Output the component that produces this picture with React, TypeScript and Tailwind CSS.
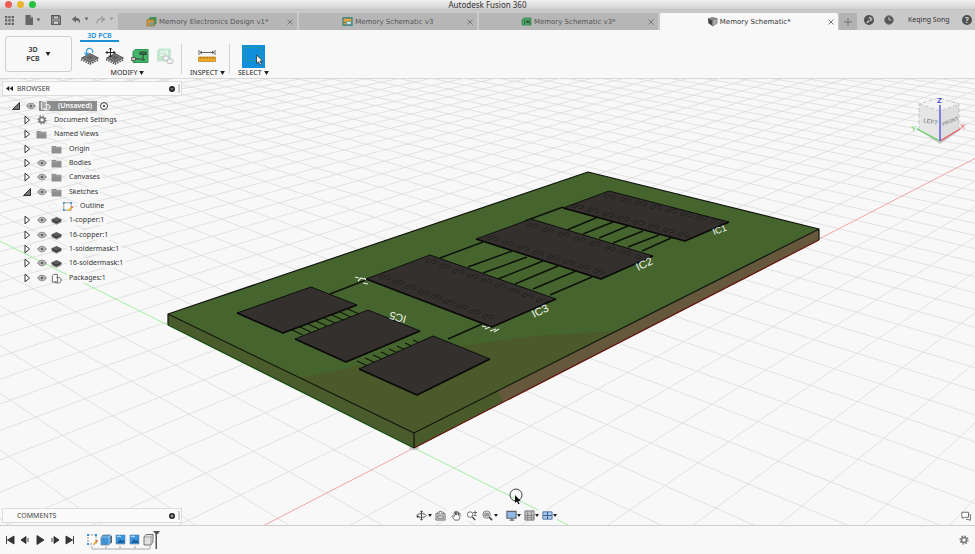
import { useState, type ReactNode } from 'react';

type Kind = 'folder' | 'gear' | 'sketch' | 'body' | 'package';

interface TreeRow {
  label: string;
  kind: Kind;
  level: 1 | 2;
  eye?: 'on' | 'off';
  open?: boolean;
}

const rows: TreeRow[] = [
  { label: 'Document Settings', kind: 'gear', level: 1 },
  { label: 'Named Views', kind: 'folder', level: 1 },
  { label: 'Origin', kind: 'folder', level: 1, eye: 'off' },
  { label: 'Bodies', kind: 'folder', level: 1, eye: 'on' },
  { label: 'Canvases', kind: 'folder', level: 1, eye: 'on' },
  { label: 'Sketches', kind: 'folder', level: 1, eye: 'on', open: true },
  { label: 'Outline', kind: 'sketch', level: 2, eye: 'off' },
  { label: '1-copper:1', kind: 'body', level: 1, eye: 'on' },
  { label: '16-copper:1', kind: 'body', level: 1, eye: 'on' },
  { label: '1-soldermask:1', kind: 'body', level: 1, eye: 'on' },
  { label: '16-soldermask:1', kind: 'body', level: 1, eye: 'on' },
  { label: 'Packages:1', kind: 'package', level: 1, eye: 'on' },
];

const tabs = [
  { label: 'Memory Electronics Design v1*', icon: 'design' },
  { label: 'Memory Schematic v3', icon: 'schematic' },
  { label: 'Memory Schematic v3*', icon: 'board' },
  { label: 'Memory Schematic*', icon: 'cube' },
];

/* ---------- small icons ---------- */

function Eye({ off }: { off?: boolean }) {
  return (
    <svg viewBox="0 0 10 8" className={`h-2 w-2.5 ${off ? 'opacity-25' : ''}`}>
      <path d="M.5 4Q5-1.8 9.5 4 5 9.8.5 4z" fill={off ? 'none' : '#a3a3a3'} stroke="#777" strokeWidth=".8" strokeDasharray={off ? '1.5 1' : undefined} />
      {!off && <circle cx="5" cy="4" r="2" fill="#666" stroke="#eee" strokeWidth=".7" />}
    </svg>
  );
}

function Arrow({ open }: { open?: boolean }) {
  return (
    <svg viewBox="0 0 8 10" className="h-2.5 w-2">
      {open ? (
        <path d="M7.5 1.5v7H.5z" fill="#777" stroke="#222" strokeWidth=".9" />
      ) : (
        <path d="M2 1.2L6.6 5 2 8.8z" fill="#fff" stroke="#333" strokeWidth="1" />
      )}
    </svg>
  );
}

function Gear({ className }: { className: string }) {
  return (
    <svg viewBox="0 0 12 12" className={className}>
      <circle cx="6" cy="6" r="4.7" fill="none" stroke="#777" strokeWidth="1.6" strokeDasharray="1.8 1.89" />
      <circle cx="6" cy="6" r="3" fill="none" stroke="#777" strokeWidth="1.8" />
    </svg>
  );
}

function PackageIcon({ light }: { light?: boolean }) {
  return (
    <svg viewBox="0 0 12 12" className="size-[11px] shrink-0">
      <path d="M1.500 10V3L3 1.500h4V10zM6 5h3.500L11 6.500V9l-1.800 1.800H5V9" fill={light ? '#aaa' : '#fafafa'} stroke={light ? '#fff' : '#555'} strokeWidth=".9" strokeLinejoin="round" />
    </svg>
  );
}

function SketchIcon() {
  return (
    <svg viewBox="0 0 12 12" className="size-[11px]">
      <path d="M2 2h8v8H2z" fill="#fff" stroke="#777" strokeWidth=".8" />
      <path d="M1 1h2v2H1zM9 1h2v2H9zM1 9h2v2H1z" fill="#3b95d9" />
      <path d="M6 11l1-2 3.500-3 1.200 1.200L8.500 10.500z" fill="#f0b73b" />
      <path d="M10 6.500l1-1 1 1.200-1 1z" fill="#d6403a" />
    </svg>
  );
}

function KindIcon({ kind }: { kind: Kind }) {
  switch (kind) {
    case 'gear':
      return <Gear className="size-2.5" />;
    case 'sketch':
      return <SketchIcon />;
    case 'package':
      return <PackageIcon />;
    case 'body':
      return (
        <svg viewBox="0 0 12 10" className="h-[9px] w-[11px]">
          <path d="M.5 5.500L6 8.500l5.500-3v1.500L6 9.800.500 7z" fill="#8a8a8a" />
          <path d="M.5 3.500v2L6 8.500l5.500-3v-2z" fill="#3d3d3d" />
          <path d="M6 1l5.500 2.500L6 6 .500 3.500z" fill="#5e5e5e" />
        </svg>
      );
    default:
      return (
        <svg viewBox="0 0 12 10" className="h-[9px] w-[11px]">
          <path d="M.5 1h4.500l1 1h5.500v7.500H.5z" fill="#8e8e8e" />
          <path d="M.5 3.200h11" stroke="#b9b9b9" strokeWidth=".6" />
        </svg>
      );
  }
}

function TabIcon({ name }: { name: string }) {
  switch (name) {
    case 'design':
      return (
        <svg viewBox="0 0 12 12" className="size-[11px]">
          <path d="M4 1h7.500v7L9 10.500H3V3z" fill="#3f9358" />
          <path d="M1 4h8v7H1z" fill="#d69337" stroke="#7d6a45" strokeWidth=".6" />
          <path d="M4 7h4v3H4z" fill="#5aa0a8" />
        </svg>
      );
    case 'schematic':
      return (
        <svg viewBox="0 0 12 10" className="h-[9px] w-[11px]">
          <path d="M1 1h10v8H1z" fill="#eba137" stroke="#1e7e88" strokeWidth="1.200" />
          <path d="M5 5h5v3H5z" fill="#e6f2f2" stroke="#2b8e99" strokeWidth=".7" />
          <path d="M2 6h2" stroke="#1e7e88" />
        </svg>
      );
    case 'board':
      return (
        <svg viewBox="0 0 12 10" className="h-[9px] w-[11px]">
          <path d="M3 1h8v8H1V3z" fill="#4fa56b" stroke="#358450" strokeWidth=".8" />
          <path d="M4 3v5M9.500 3v5" stroke="#256b3c" />
          <path d="M6 4h2.500v2.500H6z" fill="#26442f" />
        </svg>
      );
    default:
      return (
        <svg viewBox="0 0 12 12" className="size-[11px]">
          <path d="M1 2.500L6 1l5 1.500-5 2z" fill="#888" />
          <path d="M1 2.500l5 2V11L1.500 8z" fill="#444" />
          <path d="M6 4.500l5-2V8l-5 3z" fill="#aaa" stroke="#555" strokeWidth=".6" />
        </svg>
      );
  }
}

function Chip3D({ children }: { children: ReactNode }) {
  return (
    <svg viewBox="0 0 20 18" className="h-[18px] w-5">
      <path d="M1 12.500l9 4.500 9-4.500" fill="none" stroke="#555" strokeWidth="1.600" strokeDasharray="1.500 1" />
      <path d="M1.500 11L10 6.500l8.500 4.500-8.500 4.500z" fill="#7a7a7a" stroke="#444" strokeWidth=".8" />
      <path d="M6 10.500l4-2 4 2-4 2z" fill="#606060" />
      {children}
    </svg>
  );
}

/* ---------- application bar ---------- */

function TitleBar() {
  return (
    <header className="relative flex h-2.5 items-center justify-center overflow-hidden border-b border-[#c4c4c4] bg-gradient-to-b from-[#f0f0f0] to-[#d2d2d2]">
      <div className="absolute left-[5px] flex gap-[5px]">
        <button aria-label="Close" className="size-[7px] rounded-full bg-[#ee5c54]" />
        <button aria-label="Minimise" className="size-[7px] rounded-full bg-[#e9b52f]" />
        <button aria-label="Zoom" className="size-[7px] rounded-full bg-[#27c13f]" />
      </div>
      <h1 className="text-[8px] leading-[10px] text-[#333]">Autodesk Fusion 360</h1>
    </header>
  );
}

function TabBar({ active, onSelect }: { active: number; onSelect: (i: number) => void }) {
  return (
    <div className="flex h-5 items-end bg-[#c9c9c9]">
      <div className="flex h-full w-[118px] shrink-0 items-center pl-[5px]">
        <button aria-label="Data panel">
          <svg viewBox="0 0 10 10" className="size-[9px]">
            <path d="M0 0h2.500v2.500H0zM3.700 0h2.500v2.500H3.700zM7.400 0H10v2.500H7.400zM0 3.700h2.500v2.500H0zM3.700 3.700h2.500v2.500H3.700zM7.400 3.700H10v2.500H7.400zM0 7.400h2.500V10H0zM3.700 7.400h2.500V10H3.700zM7.400 7.400H10V10H7.400z" fill="#666" />
          </svg>
        </button>
        <button aria-label="File" className="ml-[10px]">
          <svg viewBox="0 0 18 10" className="h-2.5 w-[18px]">
            <path d="M1.500 0h5L9 2.500V10H1.500z" fill="#666" />
            <path d="M6.500 0v2.500H9" fill="#bbb" />
            <path d="M12.500 3.500h4l-2 3z" fill="#666" />
          </svg>
        </button>
        <button aria-label="Save" className="ml-[9px]">
          <svg viewBox="0 0 10 10" className="size-[10px]">
            <path d="M.7.700h7.600l1 1v7.600H.700z" fill="#aaa" stroke="#555" strokeWidth="1.200" />
            <path d="M2.500 1h5v3h-5zM2.500 6h5v3.500h-5z" fill="#ccc" stroke="#555" strokeWidth=".8" />
          </svg>
        </button>
        <button aria-label="Undo" className="ml-[10px]">
          <svg viewBox="0 0 18 10" className="h-2.5 w-[18px]">
            <path d="M5 1v2h1.500Q9.500 3.500 9 9 8.500 5.500 5 5.500V7.500L.800 4.200z" fill="#666" />
            <path d="M13.500 2.500h4l-2 3z" fill="#666" />
          </svg>
        </button>
        <button aria-label="Redo" className="ml-[7px]">
          <svg viewBox="0 0 18 10" className="h-2.5 w-[18px]">
            <path d="M5 1.500L8.500 4.200 5 7M8.500 4.200H4Q1 4.200 1 8.500" fill="none" stroke="#9b9b9b" strokeWidth="1.200" />
            <path d="M13.500 2.500h4l-2 3z" fill="#9b9b9b" />
          </svg>
        </button>
      </div>
      <nav className="flex h-[17px] min-w-0 flex-1 gap-[2px] font-['DejaVu_Sans','Noto_Sans',sans-serif]">
        {tabs.map((tab, i) => (
          <div
            key={tab.label}
            className={`relative flex min-w-0 flex-1 items-center justify-center rounded-t-[2px] ${
              i === active ? 'bg-[#f8f8f8] text-[#333]' : 'bg-[#b6b6b6] text-[#555]'
            }`}
          >
            <button onClick={() => onSelect(i)} className="flex items-center gap-[2px] text-[7px] leading-[10px] whitespace-nowrap">
              <TabIcon name={tab.icon} />
              {tab.label}
            </button>
            <button aria-label={`Close ${tab.label}`} className="absolute right-1">
              <svg viewBox="0 0 6 6" className="size-[6px]">
                <path d="M.5.500l5 5M5.500.500l-5 5" stroke="#777" strokeWidth="1" />
              </svg>
            </button>
          </div>
        ))}
      </nav>
      <button aria-label="New tab" className="ml-px flex h-[17px] w-[18px] shrink-0 items-center justify-center bg-[#b3b3b3]">
        <svg viewBox="0 0 8 8" className="size-2">
          <path d="M4 0v8M0 4h8" stroke="#858585" strokeWidth="1.400" />
        </svg>
      </button>
      <div className="flex h-full w-[118px] shrink-0 items-center pl-[7px] text-[7px] leading-[10px] text-[#333]">
        <button aria-label="Extensions">
          <svg viewBox="0 0 10 10" className="size-2.5">
            <circle cx="5" cy="5" r="5" fill="#505050" />
            <path d="M2.500 7.500l2.200-2.200M4.500 3.500q1-2 2.500-1L5.800 4l1 .7L8 3.500Q8 6 5.500 6L3 8" fill="none" stroke="#ccc" strokeWidth="1" />
          </svg>
        </button>
        <button aria-label="Job status" className="ml-[10px]">
          <svg viewBox="0 0 10 10" className="size-2.5">
            <circle cx="5" cy="5" r="4.300" fill="#555" stroke="#777" />
            <path d="M5 2.200V5h2.300" fill="none" stroke="#ccc" strokeWidth="1" />
          </svg>
        </button>
        <button className="ml-[14px] whitespace-nowrap">Keqing Song</button>
        <button aria-label="Help" className="mr-[3px] ml-auto flex size-2.5 items-center justify-center rounded-full bg-[#505050] text-[8px] font-bold text-[#ddd]">
          ?
        </button>
      </div>
    </div>
  );
}

function ToolGroup({ label, children }: { label: string; children: ReactNode }) {
  return (
    <div className="flex flex-col items-center">
      <div className="flex h-6 items-center gap-[5px]">{children}</div>
      <button className="flex items-center gap-[2px] text-[7px] leading-[10px] text-[#222]">
        {label}
        <svg viewBox="0 0 6 5" className="h-1 w-[5px]">
          <path d="M0 0h6L3 5z" fill="#222" />
        </svg>
      </button>
    </div>
  );
}

function Toolbar() {
  return (
    <div className="flex h-[49px] items-start border-b border-[#d9d9d9] bg-[#f8f8f8] pl-[5px]">
      <button className="mt-[6px] flex h-9 w-[67px] shrink-0 items-center justify-center gap-[5px] rounded-[3px] border border-[#cfcfcf] text-[7px] leading-[9px] font-semibold text-[#333]">
        <span>
          3D
          <br />
          PCB
        </span>
        <svg viewBox="0 0 6 5" className="h-1 w-[6px]">
          <path d="M0 0h6L3 5z" fill="#222" />
        </svg>
      </button>
      <div className="ml-[8px]">
        <button className="mt-[2px] block h-[10px] w-[39px] border-b-2 border-[#1b8fd6] text-[7px] leading-[8px] font-semibold text-[#1b8fd6]">
          3D PCB
        </button>
        <div className="mt-[2px] flex">
          <ToolGroup label="MODIFY">
            <button aria-label="Rotate component">
              <Chip3D>
                <path d="M6.500 5.500a3.200 3.200 0 116 .5M6.500 9.500V5.500M4.500 5.500l2 2.500 2-2.500" fill="none" stroke="#2d9bd8" strokeWidth="1.200" />
              </Chip3D>
            </button>
            <button aria-label="Move component">
              <Chip3D>
                <path d="M5.500 1v9M1 5.500h9M4 2.500L5.500 1 7 2.500M4 8.500L5.500 10 7 8.500M2.500 4L1 5.500 2.500 7M8.500 4L10 5.500 8.500 7" fill="none" stroke="#222" strokeWidth="1" />
              </Chip3D>
            </button>
            <button aria-label="Push to 2D board">
              <svg viewBox="0 0 20 18" className="h-[18px] w-5">
                <path d="M5 2.500H18v13H3V4.500z" fill="#45b56b" stroke="#2f9450" />
                <path d="M10 5h6v2.500h-6zM13 7.500V13M11 13h4" fill="#3c6d4b" stroke="#2c4c36" strokeWidth="1.200" />
                <path d="M1.500 10.500h4v3h-4z" fill="#ccc" stroke="#555" strokeWidth=".9" />
                <path d="M5.500 12H11" stroke="#444" strokeWidth="1.200" />
              </svg>
            </button>
            <button aria-label="Link to 2D board" disabled>
              <svg viewBox="0 0 20 18" className="h-[18px] w-5 opacity-45">
                <path d="M4 1.500h12v13H2V4z" fill="#86d69c" />
                <path d="M5 5h7M5 8h4M12 3v6" stroke="#dff2e4" strokeWidth="1.500" />
                <rect x="8" y="9" width="6" height="4.500" rx="2" fill="#eee" stroke="#777" />
                <rect x="12" y="12" width="6" height="4.500" rx="2" fill="#eee" stroke="#777" />
              </svg>
            </button>
          </ToolGroup>
          <div className="mr-[8px] ml-[6px] h-[30px] w-px bg-[#d2d2d2]" />
          <ToolGroup label="INSPECT">
            <button aria-label="Measure">
              <svg viewBox="0 0 18 12" className="h-3 w-[18px]">
                <path d="M1 0v5M17 0v5M2 2.500h14M4 1L2 2.500 4 4M14 1l2 1.500L14 4" fill="none" stroke="#555" strokeWidth=".9" />
                <path d="M.5 7h17v4.500H.5z" fill="#efac27" stroke="#b57a18" strokeWidth=".7" />
                <path d="M3 7v2M6 7v2M9 7v2M12 7v2M15 7v2" stroke="#8a5a0e" strokeWidth=".7" />
              </svg>
            </button>
          </ToolGroup>
          <div className="mr-[8px] ml-[4px] h-[30px] w-px bg-[#d2d2d2]" />
          <ToolGroup label="SELECT">
            <button aria-label="Select" className="bg-[#0f8edb]">
              <svg viewBox="0 0 23 23" className="size-[23px]">
                <path d="M2 2.500h17v13H2z" fill="none" stroke="#2ca17c" strokeWidth="1" strokeDasharray="2.500 1.500" />
                <path d="M14.500 10v8.500l2-1.800 1.500 3.300 1.500-.7-1.500-3.200h2.700z" fill="#fff" stroke="#333" strokeWidth=".8" />
              </svg>
            </button>
          </ToolGroup>
        </div>
      </div>
    </div>
  );
}

/* ---------- 3D scene ---------- */

// ground plane to screen: origin is the near corner of the board
const A = 0.0336;
const B = 0.0305;

function project(u: number, v: number) {
  const w = 1 + A * u + B * v;
  return {
    x: (414 + 1629 * A * u - 861 * B * v) / w,
    y: (448 - 179 * A * u - 189 * B * v) / w,
  };
}

function segment(u1: number, v1: number, u2: number, v2: number) {
  const p = project(u1, v1);
  const q = project(u2, v2);
  return `M${p.x.toFixed(1)} ${p.y.toFixed(1)}L${q.x.toFixed(1)} ${q.y.toFixed(1)}`;
}

function gridPath() {
  const parts: string[] = [];
  for (let u = -20; u <= 75; u++) {
    if (u !== 0) parts.push(segment(u, (-0.85 * (1 + A * u)) / B, u, 75));
  }
  for (let v = -22; v <= 75; v++) {
    if (v !== 0) parts.push(segment((-0.85 * (1 + B * v)) / A, v, 75, v));
  }
  return parts.join('');
}

const chips = [
  '237,313 311,287 357,305 283,333',
  '295,339 368,310 420,331 346,362',
  '359,369 433,336 490,359 417,395',
  '366,279 430,255 556,299 492,327',
  '476,239 531,219 653,256 601,279',
  '563,208 609,191 729,222 685,241',
];

const traces =
  'M330 294L366 280M448 339L482 324M440 258L483 242M468 267L512 251M483 273L527 257M498 279L543 261M515 284L558 266M533 289L576 271M550 295L592 277' +
  'M525 221L563 207M567 230L598 217M583 234L613 222M599 238L628 226M613 243L643 231M628 247L659 235M642 251L671 238';

const pins = [0, 1, 2, 3, 4, 5, 6, 7];

// rows of pin marks embossed on the long packages: start, end, count
const marks = [
  [430, 261, 541, 300, 9],
  [384, 277, 487, 316, 9],
  [532, 225, 640, 257, 8],
  [492, 238, 598, 271, 8],
  [609, 196, 716, 221, 8],
  [577, 206, 683, 234, 8],
];

function PinMarks() {
  return (
    <g fill="none" stroke="#1b1918" strokeWidth=".6">
      {marks.map(([x1, y1, x2, y2, n], row) =>
        Array.from({ length: n }, (_, i) => {
          const x = x1 + ((x2 - x1) * i) / (n - 1);
          const y = y1 + ((y2 - y1) * i) / (n - 1);
          return <path key={`${row}-${i}`} d={`M${x - 5} ${y}l4-2 2 1.500-3 2.500-3-1M${x + 1} ${y + 1}q3-4 5-1t-4 2.500`} />;
        }),
      )}
    </g>
  );
}

function Board() {
  return (
    <g strokeLinejoin="round">
      <ellipse cx="414" cy="448" rx="5" ry="2" fill="#c9c9c9" />
      <path d="M168 314l246 119v15L168 325z" fill="#4a5b2c" />
      <path d="M414 433l405-204v11L414 448z" fill="#65583d" />
      <path d="M414 433l84-42 5 11-89 46z" fill="#495b2b" />
      <path d="M168 314L588 172l231 57-405 204z" fill="#46652e" />
      <path d="M300 378L353 367Q465 342 547 335L616 331 414 433z" fill="#4a5a2a" />
      <path d="M168 325l246 123" stroke="#174d17" strokeWidth="1.200" />
      <path d="M414 448l405-208" stroke="#63150f" strokeWidth="1.200" />
      <path d="M168 314L588 172l231 57-405 204zM414 433v15M168 314v11M819 229v11" fill="none" stroke="#11150c" strokeWidth="1.200" />
      <path d={traces} stroke="#0c120a" strokeWidth="1.500" />
      {pins.map((i) => (
        <g key={i} stroke="#0f170b" strokeWidth="1.300">
          <path d={`M${292 + i * 8} ${330 - i * 3}l11 5`} />
          <path d={`M${357 + i * 8} ${361 - i * 3}l11 5`} />
        </g>
      ))}
      <g fill="#33302e" stroke="#0f0f0e" strokeWidth="1">
        {chips.map((points) => (
          <polygon key={points} points={points} />
        ))}
      </g>
      <PinMarks />
      <g fill="none" stroke="#0b0b0a" strokeWidth="1.600">
        <path d="M237 313l46 20 74-28M295 339l51 23 74-31M359 369l58 26 73-36M366 279l126 48 64-28M476 239l125 40 52-23M563 208l122 33 44-19" />
      </g>
      <g fill="#eef2ea" className="font-['Liberation_Sans',sans-serif] text-[11px]">
        <text transform="translate(534 318) rotate(-26)">IC3</text>
        <text transform="translate(638 271) rotate(-25)">IC2</text>
        <text transform="translate(714 235) rotate(-20)" className="text-[9px]">IC1</text>
        <text transform="translate(407 316) rotate(196)">IC5</text>
      </g>
      <path d="M355 277l4 1M358 281l3-3 3 1M363 283l5 1M364 278l2 2M482 326l4 1M485 329l5-2M490 331l6-2M494 332l5-3" stroke="#e8ece4" strokeWidth="1.100" fill="none" />
    </g>
  );
}

function ViewCube() {
  return (
    <g>
      <path d="M919 130l21 11 22-12-22 15z" fill="#999" opacity=".5" />
      <path d="M919 104l21 7v30l-21-11z" fill="#e6e6e6" />
      <path d="M940 111l19-7v25l-19 12z" fill="#dedede" />
      <path d="M919 104l20-6 20 6-19 7z" fill="#f3f3f3" />
      <path d="M919 130v-26l20-6 20 6v25M919 104l21 7 19-7" fill="none" stroke="#bcbcbc" strokeWidth=".8" strokeDasharray="4 2" />
      <path d="M917 129l23 12" stroke="#5fd35f" strokeWidth="1.300" />
      <path d="M940 141l20-12" stroke="#e25555" strokeWidth="1.300" />
      <path d="M940 141v-36" stroke="#5a5ae0" strokeWidth="1.500" />
      <g fill="#667078" className="font-['Liberation_Sans',sans-serif] text-[6px]">
        <text transform="translate(923 122) rotate(12)">LEFT</text>
        <text transform="translate(943 126) rotate(-22)" className="text-[5px]">FRONT</text>
      </g>
      <g className="font-['Liberation_Sans',sans-serif] text-[8px]">
        <text x="937" y="103" fill="#4a4ad8" className="font-bold">Z</text>
        <text x="911" y="131" fill="#5bd65b">Y</text>
        <text x="960" y="129" fill="#e65050">X</text>
      </g>
    </g>
  );
}

function Scene() {
  return (
    <svg viewBox="0 79 975 446" preserveAspectRatio="xMidYMid slice" className="absolute inset-0 h-full w-full">
      <path d={gridPath()} stroke="#dbdcdc" strokeWidth=".8" fill="none" />
      <path d={segment(-12, 0, 60, 0)} stroke="#f2a3a3" strokeWidth="1" />
      <path d={segment(0, -16, 0, 60)} stroke="#a4eda0" strokeWidth="1" />
      <Board />
      <ViewCube />
      <circle cx="516" cy="495" r="6" fill="none" stroke="#444" strokeWidth="1" />
      <path d="M515 495v8l2-1.500 1.300 2.800 1.300-.6-1.300-2.700h2.500z" fill="#111" />
    </svg>
  );
}

/* ---------- overlay panels ---------- */

function PanelHeader({ title, collapse }: { title: string; collapse?: boolean }) {
  return (
    <div className="flex h-[15px] w-[180px] items-center border border-[#dcdcdc] bg-[#fafafa] text-[7px] leading-[10px] text-[#444]">
      <span className="w-[14px] pl-[3px]">
        {collapse && (
          <svg viewBox="0 0 7 5" className="h-[5px] w-[7px]">
            <path d="M3.300 0v5L0 2.500zM7 0v5L3.700 2.500z" fill="#222" />
          </svg>
        )}
      </span>
      <h2>{title}</h2>
      <button aria-label={collapse ? 'Hide browser' : 'Show comments'} className="mr-[3px] ml-auto">
        <svg viewBox="0 0 6 6" className="size-[6px]">
          <circle cx="3" cy="3" r="3" fill="#222" />
          <path d={collapse ? 'M1.500 3h3' : 'M1.500 3h3M3 1.500v3'} stroke="#ddd" strokeWidth=".8" />
        </svg>
      </button>
      <span className="mr-px h-[9px] w-[2px] bg-[#d0d0d0]" />
    </div>
  );
}

function Browser() {
  return (
    <aside className="ml-[2px] text-[7px] leading-[10px] text-[#333]">
      <PanelHeader title="BROWSER" collapse />
      <ul className="mt-[2px]">
        <li className="flex h-[15px] items-center pl-[6px]">
          <button aria-label="Collapse root" className="flex w-[15px] justify-center">
            <Arrow open />
          </button>
          <button aria-label="Toggle root" className="flex w-[15px] justify-center">
            <Eye />
          </button>
          <span className="ml-px flex h-2.5 w-[58px] items-center gap-[7px] bg-[#8d8d8d] pl-px font-semibold text-white">
            <PackageIcon light />
            (Unsaved)
          </span>
          <input type="radio" aria-label="Activate component" defaultChecked className="ml-[3px] size-2 appearance-none rounded-full border border-[#444] bg-white p-[2px] checked:bg-[#222] checked:bg-clip-content" />
        </li>
        {rows.map((row) => (
          <li
            key={row.label}
            className={`flex h-[14px] items-center [&:nth-child(3n)]:mb-px ${row.level === 2 ? 'pl-[43px]' : 'pl-[17px]'}`}
          >
            {row.level === 1 && (
              <button aria-label={`Expand ${row.label}`} className="flex w-[15px] justify-center">
                <Arrow open={row.open} />
              </button>
            )}
            {row.eye && (
              <button aria-label={`Show ${row.label}`} className="flex w-[15px] justify-center">
                <Eye off={row.eye === 'off'} />
              </button>
            )}
            <span className="flex w-[15px] justify-center">
              <KindIcon kind={row.kind} />
            </span>
            <span className="ml-[3px] bg-[#f8f8f8] px-[2px]">{row.label}</span>
          </li>
        ))}
      </ul>
    </aside>
  );
}

function Caret() {
  return (
    <svg viewBox="0 0 4 3" className="h-[3px] w-1">
      <path d="M0 0h4L2 3z" fill="#222" />
    </svg>
  );
}

function NavTools() {
  return (
    <div className="flex items-center bg-[#f8f8f8]">
      <button aria-label="Orbit" className="flex items-center gap-px">
        <svg viewBox="0 0 12 12" className="size-[11px]">
          <ellipse cx="6" cy="6" rx="5" ry="2" fill="none" stroke="#444" strokeWidth=".9" />
          <path d="M6 1v10M4.500 2.500L6 .8l1.500 1.700M4.500 9.500L6 11.200l1.500-1.700" fill="none" stroke="#444" strokeWidth="1" />
          <path d="M3 6l-2.500.5L2 9z" fill="#222" />
        </svg>
        <Caret />
      </button>
      <button aria-label="Look at" className="ml-[3px]">
        <svg viewBox="0 0 12 12" className="size-[11px]">
          <path d="M1 4h10v7H1z" fill="#d0d0d0" stroke="#666" strokeWidth=".9" />
          <path d="M2.500 4V2M9.500 4V2M4.500 4V1.500h3V4M3 6.500h6V9H3z" fill="#eee" stroke="#666" strokeWidth=".9" />
        </svg>
      </button>
      <button aria-label="Pan" className="ml-[5px]">
        <svg viewBox="0 0 12 12" className="size-[11px]">
          <path d="M4 11L1 7q0-1.200 1.500-.5L3.500 7.500V2.500q.6-1 1.300 0V5.500 1.500q.7-1 1.400 0V5.500L6.900 2q.8-.8 1.300.2V6l.8-2.500q.9-.5 1 .5L9.500 8.500 8.500 11z" fill="#fff" stroke="#444" strokeWidth=".8" />
        </svg>
      </button>
      <button aria-label="Zoom" className="ml-[4px]">
        <svg viewBox="0 0 12 12" className="size-[11px]">
          <circle cx="4.500" cy="5" r="3" fill="#fff" stroke="#666" />
          <path d="M6.800 7.500L10 11" stroke="#444" strokeWidth="1.600" />
          <path d="M10 .8v4M8 2.800h4M8.500 6h3" stroke="#333" strokeWidth=".8" />
        </svg>
      </button>
      <button aria-label="Fit" className="ml-[5px] flex items-center gap-px">
        <svg viewBox="0 0 12 12" className="size-[11px]">
          <circle cx="5" cy="5" r="4" fill="#e6e6e6" stroke="#777" />
          <path d="M3 3.500h4v3H3z" fill="#aaa" stroke="#666" strokeWidth=".6" />
          <path d="M8 8l3 3" stroke="#444" strokeWidth="1.800" />
        </svg>
        <Caret />
      </button>
      <button aria-label="Display settings" className="ml-[8px] flex items-center">
        <svg viewBox="0 0 12 12" className="size-[11px]">
          <path d="M1 1.500h10v7.500H1z" fill="#8fb8e6" stroke="#5b6570" strokeWidth="1.200" />
          <path d="M4 11h5M6.500 9v2" stroke="#666" strokeWidth="1.300" />
        </svg>
        <Caret />
      </button>
      <button aria-label="Grid and snaps" className="ml-[3px] flex items-center">
        <svg viewBox="0 0 12 12" className="size-[11px]">
          <path d="M1 1h10v10H1z" fill="#c4c4c4" stroke="#777" />
          <path d="M4 1v10M8 1v10M1 6h10M1 8.500h10" stroke="#777" strokeWidth=".8" />
        </svg>
        <Caret />
      </button>
      <button aria-label="Viewports" className="ml-[3px] flex items-center">
        <svg viewBox="0 0 12 12" className="size-[11px]">
          <path d="M1 2h10v8H1z" fill="#a8cbf0" stroke="#4c6f9a" />
          <path d="M6 2v8M1 6h10" stroke="#3f618c" strokeWidth="1.100" />
        </svg>
        <Caret />
      </button>
    </div>
  );
}

const playback = [
  { label: 'Go to start', d: 'M1.500 1v8M9 1v8L2.500 5z' },
  { label: 'Step back', d: 'M6 1.500v7L1 5zM8 3v4' },
  { label: 'Play', d: 'M2 .5v9L9 5z' },
  { label: 'Step forward', d: 'M4 1.500v7L9 5zM2 3v4' },
  { label: 'Go to end', d: 'M8.500 1v8M1 1v8l6.500-4z' },
];

function Timeline() {
  return (
    <footer className="flex h-7 items-center bg-[#f8f8f8] pr-[6px] pl-[5px]">
      <div className="flex gap-[5px]">
        {playback.map((b) => (
          <button key={b.label} aria-label={b.label}>
            <svg viewBox="0 0 10 10" className="size-2.5">
              <path d={b.d} fill="#333" stroke="#333" strokeWidth=".9" />
            </svg>
          </button>
        ))}
      </div>
      {/* feature history with the end marker */}
      <svg viewBox="0 0 78 24" className="ml-[11px] h-6 w-[78px]">
        <path d="M2 7h8v9H2z" fill="#fff" stroke="#777" strokeWidth=".8" strokeDasharray="2 1" />
        <path d="M1 6h2v2H1zM9 6h2v2H9zM1 15h2v2H1z" fill="#3b95d9" />
        <path d="M7 16l3-4 1.500 1.500L8 17z" fill="#eeb02e" />
        <path d="M10 13l1-1 1 1-1 1z" fill="#d6403a" />
        <path d="M15 9l2-2h8v8l-2 2h-8z" fill="#3f93d6" stroke="#7f8a92" strokeWidth=".8" />
        <path d="M15 9h8v8M23 9l2-2" fill="none" stroke="#a9d3f2" strokeWidth=".8" />
        <path d="M25.500 8v7" stroke="#444" strokeWidth=".8" />
        <path d="M30 7h9v9h-9zM44 7h9v9h-9z" fill="#3796df" stroke="#5b84a5" strokeWidth=".6" />
        <path d="M31 15l3-4 2 2 1.500-1.500L38.500 15zM45 15l3-4 2 2 1.500-1.500L52.500 15z" fill="#1b5f9c" />
        <path d="M31 9q2-2 4 0M45 9q2-2 4 0" stroke="#d7ecfb" fill="none" />
        <path d="M58 9l2-2.500h7v7L65 17h-7z" fill="#e2e2e2" stroke="#666" strokeWidth=".9" strokeLinejoin="round" />
        <path d="M58 9h7v8M65 9l2-2.500" fill="none" stroke="#888" strokeWidth=".7" />
        <path d="M67 3h7l-2 3h-1v15h-1.500V6z" fill="#555" />
        <path d="M6 18v3h58v-3M20 18v3M34 18v3M49 18v3" fill="none" stroke="#aaa" strokeWidth="1" />
      </svg>
      <button aria-label="Timeline settings" className="ml-auto">
        <Gear className="size-2.5" />
      </button>
    </footer>
  );
}

export default function App() {
  const [active, setActive] = useState(3);

  return (
    <div className="flex h-screen flex-col overflow-hidden bg-[#f8f8f8] font-['Noto_Sans','Open_Sans',sans-serif]">
      <TitleBar />
      <TabBar active={active} onSelect={setActive} />
      <Toolbar />
      <main className="relative flex min-h-0 flex-1 flex-col justify-between border-b border-[#cfcfcf]">
        <Scene />
        <div className="relative pt-[2px]">
          <Browser />
        </div>
        <div className="relative grid grid-cols-[1fr_auto_1fr] items-center pr-[4px] pb-[2px] pl-[2px]">
          <PanelHeader title="COMMENTS" />
          <NavTools />
          <button aria-label="Comments" className="justify-self-end">
            <svg viewBox="0 0 12 12" className="size-2.5">
              <path d="M1 1.500h8v6H4L2.500 9V7.500H1z" fill="#fff" stroke="#555" />
              <path d="M10 4.500h1.500v5.500h-1v1.500L9 10H6" fill="none" stroke="#555" />
            </svg>
          </button>
        </div>
      </main>
      <Timeline />
    </div>
  );
}
